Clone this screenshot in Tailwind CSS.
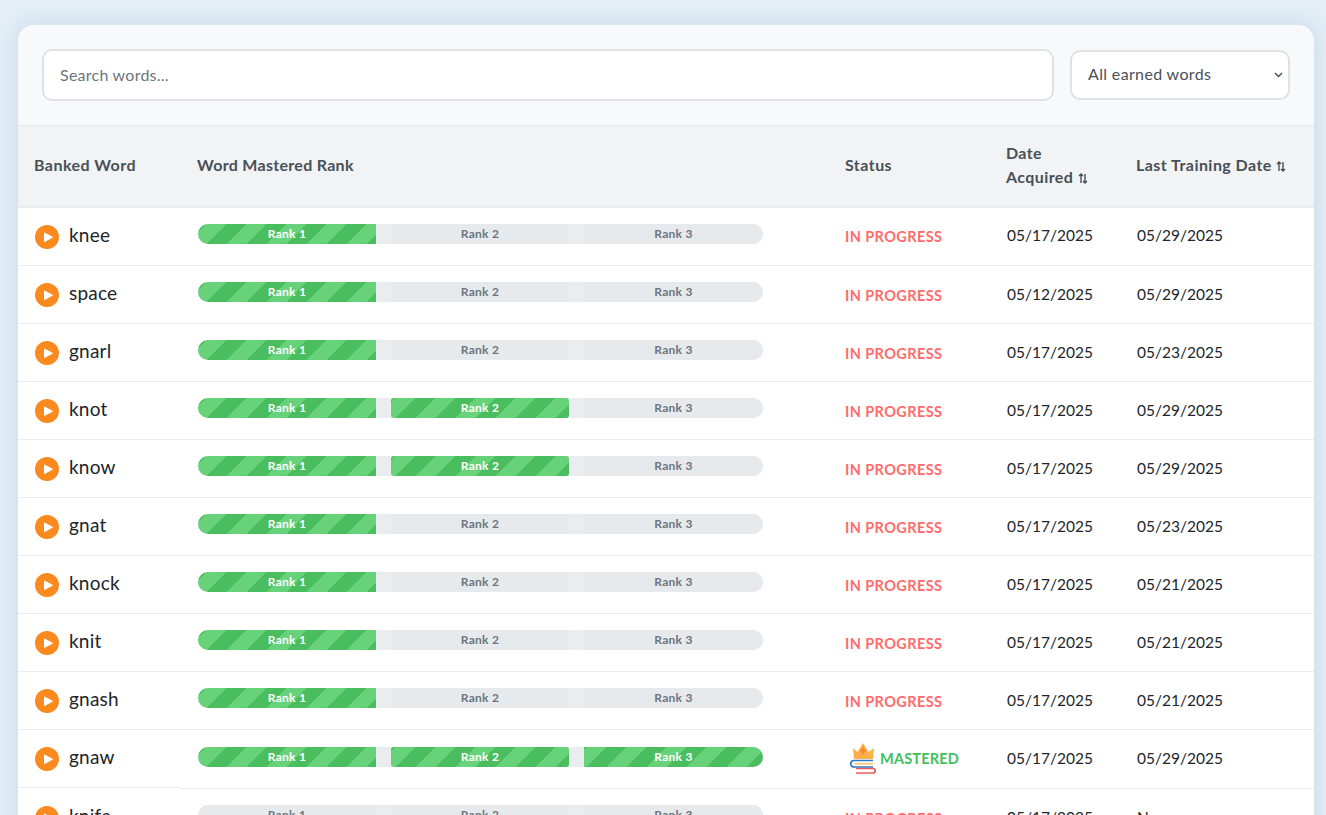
<!DOCTYPE html>
<html><head><meta charset="utf-8"><title>Word Bank</title><script src="https://cdn.jsdelivr.net/npm/@tailwindcss/browser@4"></script></head>
<body class="h-[815px] overflow-hidden bg-[#e3eef6] font-['Lato',sans-serif] text-[#212529]">
<main class="pl-[18px] pr-3 pt-[25px]">
<section class="rounded-t-2xl bg-white shadow-[0_0_20px_rgba(120,150,175,0.25)] overflow-hidden">
<div class="flex items-center gap-4 bg-[#f8f9fb] h-[101px] pl-6 pr-6 border-b border-[#e9ecef]">
<input placeholder="Search words..." class="flex-1 h-[52px] bg-white border-2 border-[#dee2e6] rounded-[10px] pl-4 pb-[2px] text-[16px] tracking-[0.25px] placeholder:text-[#6c757d] outline-none">
<div class="relative w-[220px] h-[50px]"><select class="appearance-none w-full h-full bg-white border-2 border-[#dee2e6] rounded-[10px] pl-4 pr-1 pb-[3px] text-[16px] tracking-[0.35px] text-[#495057]"><option>All earned words</option></select><svg class="absolute right-[7px] top-[22px] w-[9px] h-[6px]" viewBox="0 0 9 6" fill="none" stroke="#495057" stroke-width="1.500"><path d="M1 1l3.500 3.500L8 1"/></svg></div>
</div>
<div class="flex h-[82px] pb-[2px] items-center bg-[#f1f3f5] border-b-2 border-[#e9ecef] text-[16px] font-bold text-[#495057]">
<div class="w-[163px] pl-4 tracking-[0.45px]">Banked Word</div>
<div class="w-[648px] pl-4 tracking-[0.3px]">Word Mastered Rank</div>
<div class="w-[161px] pl-4 tracking-[0.45px]">Status</div>
<div class="w-[130px] pl-4 leading-6 tracking-[0.4px]">Date<br>Acquired <svg class="inline w-[10px] h-[11px] align-[-1px]" viewBox="0 0 10 11" fill="none" stroke="#495057" stroke-width="1.4"><path d="M3 10V1M1 3l2-2 2 2M7 1v9M5 8l2 2 2-2"/></svg></div>
<div class="flex-1 pl-4 tracking-[0.45px]">Last Training Date <svg class="inline w-[10px] h-[11px] align-[-1px]" viewBox="0 0 10 11" fill="none" stroke="#495057" stroke-width="1.4"><path d="M3 10V1M1 3l2-2 2 2M7 1v9M5 8l2 2 2-2"/></svg></div>
</div>

<div class="flex h-[58px] border-b border-[#e9ecef] text-[15.5px]"><div class="w-[163px] pl-[17px] flex items-center gap-[10px]"><svg class="w-6 h-6 shrink-0" viewBox="0 0 24 24"><circle cx="12" cy="12" r="12" fill="#fb8a1e"/><path d="M9.500 8v8.500l8-4.250z" fill="#fff" stroke="#fff" stroke-linejoin="round"/></svg><span class="text-[19px] tracking-[0.2px] mb-[2px]">knee</span></div><div class="w-[648px] pl-[17px] pt-4"><div class="flex w-[565px] h-5 gap-[15px] rounded-full bg-[#eaedf0] text-[12px] tracking-[0.25px] font-bold"><div class="w-[178px] flex items-center justify-center rounded-l-full rounded-r-[3px] text-white bg-[#4abe5f] bg-[linear-gradient(135deg,#68d27b_25%,transparent_25%,transparent_50%,#68d27b_50%,#68d27b_75%,transparent_75%)] bg-[length:40px_40px] bg-[position:9px_0]">Rank 1</div><div class="w-[178px] flex items-center justify-center bg-[#e7eaed] text-[#6c757d]">Rank 2</div><div class="flex-1 flex items-center justify-center rounded-r-full bg-[#e7eaed] text-[#6c757d]">Rank 3</div></div></div><div class="w-[161px] pl-4 flex items-center text-[14.5px] font-bold text-[#ff6b6b] tracking-[0.4px]">IN PROGRESS</div><div class="w-[130px] pl-[17px] pb-[2px] flex items-center">05/17/2025</div><div class="flex-1 pl-[17px] pb-[2px] flex items-center">05/29/2025</div></div>

<div class="flex h-[58px] border-b border-[#e9ecef] text-[15.5px]"><div class="w-[163px] pl-[17px] flex items-center gap-[10px]"><svg class="w-6 h-6 shrink-0" viewBox="0 0 24 24"><circle cx="12" cy="12" r="12" fill="#fb8a1e"/><path d="M9.500 8v8.500l8-4.250z" fill="#fff" stroke="#fff" stroke-linejoin="round"/></svg><span class="text-[19px] tracking-[0.2px] mb-[2px]">space</span></div><div class="w-[648px] pl-[17px] pt-4"><div class="flex w-[565px] h-5 gap-[15px] rounded-full bg-[#eaedf0] text-[12px] tracking-[0.25px] font-bold"><div class="w-[178px] flex items-center justify-center rounded-l-full rounded-r-[3px] text-white bg-[#4abe5f] bg-[linear-gradient(135deg,#68d27b_25%,transparent_25%,transparent_50%,#68d27b_50%,#68d27b_75%,transparent_75%)] bg-[length:40px_40px] bg-[position:9px_0]">Rank 1</div><div class="w-[178px] flex items-center justify-center bg-[#e7eaed] text-[#6c757d]">Rank 2</div><div class="flex-1 flex items-center justify-center rounded-r-full bg-[#e7eaed] text-[#6c757d]">Rank 3</div></div></div><div class="w-[161px] pl-4 pt-[2px] flex items-center text-[14.5px] font-bold text-[#ff6b6b] tracking-[0.4px]">IN PROGRESS</div><div class="w-[130px] pl-[17px] flex items-center">05/12/2025</div><div class="flex-1 pl-[17px] flex items-center">05/29/2025</div></div>

<div class="flex h-[58px] border-b border-[#e9ecef] text-[15.5px]"><div class="w-[163px] pl-[17px] flex items-center gap-[10px]"><svg class="w-6 h-6 shrink-0" viewBox="0 0 24 24"><circle cx="12" cy="12" r="12" fill="#fb8a1e"/><path d="M9.500 8v8.500l8-4.250z" fill="#fff" stroke="#fff" stroke-linejoin="round"/></svg><span class="text-[19px] tracking-[0.2px] mb-[2px]">gnarl</span></div><div class="w-[648px] pl-[17px] pt-4"><div class="flex w-[565px] h-5 gap-[15px] rounded-full bg-[#eaedf0] text-[12px] tracking-[0.25px] font-bold"><div class="w-[178px] flex items-center justify-center rounded-l-full rounded-r-[3px] text-white bg-[#4abe5f] bg-[linear-gradient(135deg,#68d27b_25%,transparent_25%,transparent_50%,#68d27b_50%,#68d27b_75%,transparent_75%)] bg-[length:40px_40px] bg-[position:9px_0]">Rank 1</div><div class="w-[178px] flex items-center justify-center bg-[#e7eaed] text-[#6c757d]">Rank 2</div><div class="flex-1 flex items-center justify-center rounded-r-full bg-[#e7eaed] text-[#6c757d]">Rank 3</div></div></div><div class="w-[161px] pl-4 pt-[2px] flex items-center text-[14.5px] font-bold text-[#ff6b6b] tracking-[0.4px]">IN PROGRESS</div><div class="w-[130px] pl-[17px] flex items-center">05/17/2025</div><div class="flex-1 pl-[17px] flex items-center">05/23/2025</div></div>

<div class="flex h-[58px] border-b border-[#e9ecef] text-[15.5px]"><div class="w-[163px] pl-[17px] flex items-center gap-[10px]"><svg class="w-6 h-6 shrink-0" viewBox="0 0 24 24"><circle cx="12" cy="12" r="12" fill="#fb8a1e"/><path d="M9.500 8v8.500l8-4.250z" fill="#fff" stroke="#fff" stroke-linejoin="round"/></svg><span class="text-[19px] tracking-[0.2px] mb-[2px]">knot</span></div><div class="w-[648px] pl-[17px] pt-4"><div class="flex w-[565px] h-5 gap-[15px] rounded-full bg-[#eaedf0] text-[12px] tracking-[0.25px] font-bold"><div class="w-[178px] flex items-center justify-center rounded-l-full rounded-r-[3px] text-white bg-[#4abe5f] bg-[linear-gradient(135deg,#68d27b_25%,transparent_25%,transparent_50%,#68d27b_50%,#68d27b_75%,transparent_75%)] bg-[length:40px_40px] bg-[position:9px_0]">Rank 1</div><div class="w-[178px] flex items-center justify-center rounded-[3px] text-white bg-[#4abe5f] bg-[linear-gradient(135deg,#68d27b_25%,transparent_25%,transparent_50%,#68d27b_50%,#68d27b_75%,transparent_75%)] bg-[length:40px_40px] bg-[position:5px_0]">Rank 2</div><div class="flex-1 flex items-center justify-center rounded-r-full bg-[#e7eaed] text-[#6c757d]">Rank 3</div></div></div><div class="w-[161px] pl-4 pt-[2px] flex items-center text-[14.5px] font-bold text-[#ff6b6b] tracking-[0.4px]">IN PROGRESS</div><div class="w-[130px] pl-[17px] flex items-center">05/17/2025</div><div class="flex-1 pl-[17px] flex items-center">05/29/2025</div></div>

<div class="flex h-[58px] border-b border-[#e9ecef] text-[15.5px]"><div class="w-[163px] pl-[17px] flex items-center gap-[10px]"><svg class="w-6 h-6 shrink-0" viewBox="0 0 24 24"><circle cx="12" cy="12" r="12" fill="#fb8a1e"/><path d="M9.500 8v8.500l8-4.250z" fill="#fff" stroke="#fff" stroke-linejoin="round"/></svg><span class="text-[19px] tracking-[0.2px] mb-[2px]">know</span></div><div class="w-[648px] pl-[17px] pt-4"><div class="flex w-[565px] h-5 gap-[15px] rounded-full bg-[#eaedf0] text-[12px] tracking-[0.25px] font-bold"><div class="w-[178px] flex items-center justify-center rounded-l-full rounded-r-[3px] text-white bg-[#4abe5f] bg-[linear-gradient(135deg,#68d27b_25%,transparent_25%,transparent_50%,#68d27b_50%,#68d27b_75%,transparent_75%)] bg-[length:40px_40px] bg-[position:9px_0]">Rank 1</div><div class="w-[178px] flex items-center justify-center rounded-[3px] text-white bg-[#4abe5f] bg-[linear-gradient(135deg,#68d27b_25%,transparent_25%,transparent_50%,#68d27b_50%,#68d27b_75%,transparent_75%)] bg-[length:40px_40px] bg-[position:5px_0]">Rank 2</div><div class="flex-1 flex items-center justify-center rounded-r-full bg-[#e7eaed] text-[#6c757d]">Rank 3</div></div></div><div class="w-[161px] pl-4 pt-[2px] flex items-center text-[14.5px] font-bold text-[#ff6b6b] tracking-[0.4px]">IN PROGRESS</div><div class="w-[130px] pl-[17px] flex items-center">05/17/2025</div><div class="flex-1 pl-[17px] flex items-center">05/29/2025</div></div>

<div class="flex h-[58px] border-b border-[#e9ecef] text-[15.5px]"><div class="w-[163px] pl-[17px] flex items-center gap-[10px]"><svg class="w-6 h-6 shrink-0" viewBox="0 0 24 24"><circle cx="12" cy="12" r="12" fill="#fb8a1e"/><path d="M9.500 8v8.500l8-4.250z" fill="#fff" stroke="#fff" stroke-linejoin="round"/></svg><span class="text-[19px] tracking-[0.2px] mb-[2px]">gnat</span></div><div class="w-[648px] pl-[17px] pt-4"><div class="flex w-[565px] h-5 gap-[15px] rounded-full bg-[#eaedf0] text-[12px] tracking-[0.25px] font-bold"><div class="w-[178px] flex items-center justify-center rounded-l-full rounded-r-[3px] text-white bg-[#4abe5f] bg-[linear-gradient(135deg,#68d27b_25%,transparent_25%,transparent_50%,#68d27b_50%,#68d27b_75%,transparent_75%)] bg-[length:40px_40px] bg-[position:9px_0]">Rank 1</div><div class="w-[178px] flex items-center justify-center bg-[#e7eaed] text-[#6c757d]">Rank 2</div><div class="flex-1 flex items-center justify-center rounded-r-full bg-[#e7eaed] text-[#6c757d]">Rank 3</div></div></div><div class="w-[161px] pl-4 pt-[2px] flex items-center text-[14.5px] font-bold text-[#ff6b6b] tracking-[0.4px]">IN PROGRESS</div><div class="w-[130px] pl-[17px] flex items-center">05/17/2025</div><div class="flex-1 pl-[17px] flex items-center">05/23/2025</div></div>

<div class="flex h-[58px] border-b border-[#e9ecef] text-[15.5px]"><div class="w-[163px] pl-[17px] flex items-center gap-[10px]"><svg class="w-6 h-6 shrink-0" viewBox="0 0 24 24"><circle cx="12" cy="12" r="12" fill="#fb8a1e"/><path d="M9.500 8v8.500l8-4.250z" fill="#fff" stroke="#fff" stroke-linejoin="round"/></svg><span class="text-[19px] tracking-[0.2px] mb-[2px]">knock</span></div><div class="w-[648px] pl-[17px] pt-4"><div class="flex w-[565px] h-5 gap-[15px] rounded-full bg-[#eaedf0] text-[12px] tracking-[0.25px] font-bold"><div class="w-[178px] flex items-center justify-center rounded-l-full rounded-r-[3px] text-white bg-[#4abe5f] bg-[linear-gradient(135deg,#68d27b_25%,transparent_25%,transparent_50%,#68d27b_50%,#68d27b_75%,transparent_75%)] bg-[length:40px_40px] bg-[position:9px_0]">Rank 1</div><div class="w-[178px] flex items-center justify-center bg-[#e7eaed] text-[#6c757d]">Rank 2</div><div class="flex-1 flex items-center justify-center rounded-r-full bg-[#e7eaed] text-[#6c757d]">Rank 3</div></div></div><div class="w-[161px] pl-4 pt-[2px] flex items-center text-[14.5px] font-bold text-[#ff6b6b] tracking-[0.4px]">IN PROGRESS</div><div class="w-[130px] pl-[17px] flex items-center">05/17/2025</div><div class="flex-1 pl-[17px] flex items-center">05/21/2025</div></div>

<div class="flex h-[58px] border-b border-[#e9ecef] text-[15.5px]"><div class="w-[163px] pl-[17px] flex items-center gap-[10px]"><svg class="w-6 h-6 shrink-0" viewBox="0 0 24 24"><circle cx="12" cy="12" r="12" fill="#fb8a1e"/><path d="M9.500 8v8.500l8-4.250z" fill="#fff" stroke="#fff" stroke-linejoin="round"/></svg><span class="text-[19px] tracking-[0.2px] mb-[2px]">knit</span></div><div class="w-[648px] pl-[17px] pt-4"><div class="flex w-[565px] h-5 gap-[15px] rounded-full bg-[#eaedf0] text-[12px] tracking-[0.25px] font-bold"><div class="w-[178px] flex items-center justify-center rounded-l-full rounded-r-[3px] text-white bg-[#4abe5f] bg-[linear-gradient(135deg,#68d27b_25%,transparent_25%,transparent_50%,#68d27b_50%,#68d27b_75%,transparent_75%)] bg-[length:40px_40px] bg-[position:9px_0]">Rank 1</div><div class="w-[178px] flex items-center justify-center bg-[#e7eaed] text-[#6c757d]">Rank 2</div><div class="flex-1 flex items-center justify-center rounded-r-full bg-[#e7eaed] text-[#6c757d]">Rank 3</div></div></div><div class="w-[161px] pl-4 pt-[2px] flex items-center text-[14.5px] font-bold text-[#ff6b6b] tracking-[0.4px]">IN PROGRESS</div><div class="w-[130px] pl-[17px] flex items-center">05/17/2025</div><div class="flex-1 pl-[17px] flex items-center">05/21/2025</div></div>

<div class="flex h-[58px] border-b border-[#e9ecef] text-[15.5px]"><div class="w-[163px] pl-[17px] flex items-center gap-[10px]"><svg class="w-6 h-6 shrink-0" viewBox="0 0 24 24"><circle cx="12" cy="12" r="12" fill="#fb8a1e"/><path d="M9.500 8v8.500l8-4.250z" fill="#fff" stroke="#fff" stroke-linejoin="round"/></svg><span class="text-[19px] tracking-[0.2px] mb-[2px]">gnash</span></div><div class="w-[648px] pl-[17px] pt-4"><div class="flex w-[565px] h-5 gap-[15px] rounded-full bg-[#eaedf0] text-[12px] tracking-[0.25px] font-bold"><div class="w-[178px] flex items-center justify-center rounded-l-full rounded-r-[3px] text-white bg-[#4abe5f] bg-[linear-gradient(135deg,#68d27b_25%,transparent_25%,transparent_50%,#68d27b_50%,#68d27b_75%,transparent_75%)] bg-[length:40px_40px] bg-[position:9px_0]">Rank 1</div><div class="w-[178px] flex items-center justify-center bg-[#e7eaed] text-[#6c757d]">Rank 2</div><div class="flex-1 flex items-center justify-center rounded-r-full bg-[#e7eaed] text-[#6c757d]">Rank 3</div></div></div><div class="w-[161px] pl-4 pt-[2px] flex items-center text-[14.5px] font-bold text-[#ff6b6b] tracking-[0.4px]">IN PROGRESS</div><div class="w-[130px] pl-[17px] flex items-center">05/17/2025</div><div class="flex-1 pl-[17px] flex items-center">05/21/2025</div></div>

<div class="flex h-[59px] text-[15.5px]"><div class="w-[163px] h-[58px] border-b border-[#e9ecef] pl-[17px] flex items-center gap-[10px]"><svg class="w-6 h-6 shrink-0" viewBox="0 0 24 24"><circle cx="12" cy="12" r="12" fill="#fb8a1e"/><path d="M9.500 8v8.500l8-4.250z" fill="#fff" stroke="#fff" stroke-linejoin="round"/></svg><span class="text-[19px] tracking-[0.2px] mb-[2px]">gnaw</span></div><div class="w-[648px] pl-[17px] pt-[17px] border-b border-[#e9ecef]"><div class="flex w-[565px] h-5 gap-[15px] rounded-full bg-[#eaedf0] text-[12px] tracking-[0.25px] font-bold"><div class="w-[178px] flex items-center justify-center rounded-l-full rounded-r-[3px] text-white bg-[#4abe5f] bg-[linear-gradient(135deg,#68d27b_25%,transparent_25%,transparent_50%,#68d27b_50%,#68d27b_75%,transparent_75%)] bg-[length:40px_40px] bg-[position:9px_0]">Rank 1</div><div class="w-[178px] flex items-center justify-center rounded-[3px] text-white bg-[#4abe5f] bg-[linear-gradient(135deg,#68d27b_25%,transparent_25%,transparent_50%,#68d27b_50%,#68d27b_75%,transparent_75%)] bg-[length:40px_40px] bg-[position:5px_0]">Rank 2</div><div class="flex-1 flex items-center justify-center rounded-l-[3px] rounded-r-full text-white bg-[#4abe5f] bg-[linear-gradient(135deg,#68d27b_25%,transparent_25%,transparent_50%,#68d27b_50%,#68d27b_75%,transparent_75%)] bg-[length:40px_40px] bg-[position:3px_0]">Rank 3</div></div></div><div class="w-[161px] pl-[20px] flex items-center gap-[3px] border-b border-[#e9ecef] text-[14.5px] font-bold text-[#3fbf5f] tracking-[0.2px]"><svg class="w-7 h-8 shrink-0" viewBox="0 0 28 32" fill="none"><path d="M4 5l4.500 4L14 0l5.500 9L25 5l-1 11H5z" fill="#fdb04a"/><path d="M14 3l3 5-3 4-3-4z" fill="#fb8a2e"/><path d="M24 17.500H5a3.250 3.250 0 0 0 0 6.500H24" stroke="#2b7bc0" stroke-width="1.700"/><path d="M6 20.800H24" stroke="#fbc35a" stroke-width="1.500"/><path d="M7 25.500H24a2.250 2.250 0 0 1 0 4.500H7" stroke="#ef5a5a" stroke-width="1.700"/></svg>MASTERED</div><div class="w-[130px] pl-[17px] flex items-center border-b border-[#e9ecef]">05/17/2025</div><div class="flex-1 pl-[17px] flex items-center border-b border-[#e9ecef]">05/29/2025</div></div>

<div class="flex h-[58px] border-b border-[#e9ecef] text-[15.5px]"><div class="w-[163px] pl-[17px] flex items-center gap-[10px]"><svg class="w-6 h-6 shrink-0" viewBox="0 0 24 24"><circle cx="12" cy="12" r="12" fill="#fb8a1e"/><path d="M9.500 8v8.500l8-4.250z" fill="#fff" stroke="#fff" stroke-linejoin="round"/></svg><span class="text-[19px] tracking-[0.2px] mb-[2px]">knife</span></div><div class="w-[648px] pl-[17px] pt-4"><div class="flex w-[565px] h-5 gap-[15px] rounded-full bg-[#eaedf0] text-[12px] tracking-[0.25px] font-bold"><div class="w-[178px] flex items-center justify-center rounded-l-full bg-[#e7eaed] text-[#6c757d]">Rank 1</div><div class="w-[178px] flex items-center justify-center bg-[#e7eaed] text-[#6c757d]">Rank 2</div><div class="flex-1 flex items-center justify-center rounded-r-full bg-[#e7eaed] text-[#6c757d]">Rank 3</div></div></div><div class="w-[161px] pl-4 pt-[2px] flex items-center text-[14.5px] font-bold text-[#ff6b6b] tracking-[0.4px]">IN PROGRESS</div><div class="w-[130px] pl-[17px] flex items-center">05/17/2025</div><div class="flex-1 pl-[17px] flex items-center">Never</div></div>
</section>
</main>
</body></html>
